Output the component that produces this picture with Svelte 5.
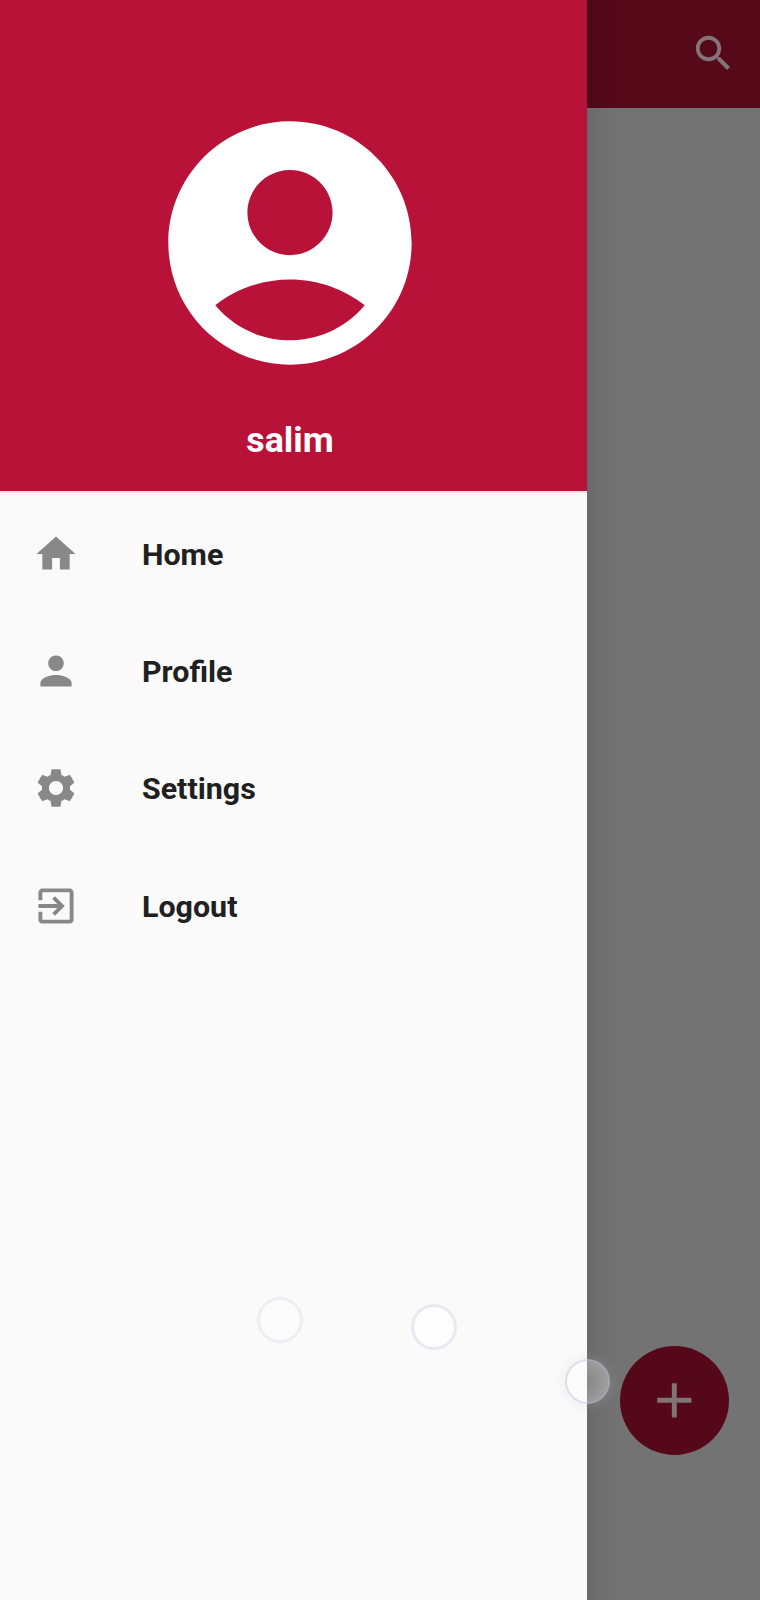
<script>
  const items = [
    { label: 'Home', path: 'M10 20v-6h4v6h5v-8h3L12 3 2 12h3v8z' },
    { label: 'Profile', path: 'M12 12c2.21 0 4-1.79 4-4s-1.79-4-4-4-4 1.79-4 4 1.79 4 4 4zm0 2c-2.67 0-8 1.34-8 4v2h16v-2c0-2.66-5.33-4-8-4z' },
    { label: 'Settings', path: 'M19.14 12.94c.04-.3.06-.61.06-.94 0-.32-.02-.64-.07-.94l2.03-1.58c.18-.14.23-.41.12-.61l-1.92-3.32c-.12-.22-.37-.29-.59-.22l-2.39.96c-.5-.38-1.03-.7-1.62-.94l-.36-2.54c-.04-.24-.24-.41-.48-.41h-3.84c-.24 0-.43.17-.47.41l-.36 2.54c-.59.24-1.13.57-1.62.94l-2.39-.96c-.22-.08-.47 0-.59.22L2.74 8.87c-.12.21-.08.47.12.61l2.03 1.58c-.05.3-.09.63-.09.94s.02.64.07.94l-2.03 1.58c-.18.14-.23.41-.12.61l1.92 3.32c.12.22.37.29.59.22l2.39-.96c.5.38 1.03.7 1.62.94l.36 2.54c.05.24.24.41.48.41h3.84c.24 0 .44-.17.47-.41l.36-2.54c.59-.24 1.13-.56 1.62-.94l2.39.96c.22.08.47 0 .59-.22l1.92-3.32c.12-.22.07-.47-.12-.61l-2.01-1.58zM12 15.6c-1.98 0-3.6-1.62-3.6-3.6s1.62-3.6 3.6-3.6 3.6 1.62 3.6 3.6-1.62 3.6-3.6 3.6z' },
    { label: 'Logout', path: 'M10.09 15.59L11.5 17l5-5-5-5-1.41 1.41L12.67 11H3v2h9.67l-2.58 2.59zM19 3H5c-1.11 0-2 .9-2 2v4h2V5h14v14H5v-4H3v4c0 1.1.89 2 2 2h14c1.1 0 2-.9 2-2V5c0-1.1-.9-2-2-2z' }
  ];
</script>

<div class="screen">
  <aside class="drawer">
    <header>
      <svg class="avatar" viewBox="0 0 24 24">
        <path fill-rule="evenodd" d="M12 2C6.48 2 2 6.48 2 12s4.48 10 10 10 10-4.48 10-10S17.52 2 12 2zM12 6c1.93 0 3.5 1.57 3.5 3.5S13.93 13 12 13s-3.5-1.57-3.5-3.5S10.07 6 12 6zM12 20c-2.03 0-4.43-.82-6.14-2.88C7.55 15.8 9.68 15 12 15s4.45.8 6.14 2.12C16.43 19.18 14.03 20 12 20z" />
      </svg>
      <div class="name">salim</div>
    </header>
    <nav>
      {#each items as item}
        <div class="item">
          <svg viewBox="-0.3 -0.3 24.6 24.6"><path d={item.path} /></svg>
          <span>{item.label}</span>
        </div>
      {/each}
    </nav>
  </aside>
  <main>
    <div class="appbar">
      <svg viewBox="0 0 24 24"><path d="M15.5 14h-.79l-.28-.27C15.41 12.59 16 11.11 16 9.5 16 5.91 13.09 3 9.5 3S3 5.91 3 9.5 5.91 16 9.5 16c1.61 0 3.09-.59 4.23-1.57l.27.28v.79l5 4.99L20.49 19l-4.99-5zm-6 0C7.01 14 5 11.99 5 9.5S7.01 5 9.5 5 14 7.01 14 9.5 11.99 14 9.5 14z" /></svg>
    </div>
    <div class="fab">
      <svg viewBox="0 0 24 24"><path d="M19 13h-6v6h-2v-6H5v-2h6V5h2v6h6v2z" /></svg>
    </div>
  </main>
  <i class="touch first"></i>
  <i class="touch second"></i>
  <i class="touch third"></i>
</div>

<style>
  :global(body) { margin: 0; }
  .screen {
    position: relative;
    display: flex;
    width: 760px;
    height: 1600px;
    overflow: hidden;
    background: #737373;
    font-family: Roboto, sans-serif;
    font-weight: 700;
  }
  svg { display: block; fill: currentColor; flex: none; }
  .drawer { width: 587px; flex: none; background: #fafafa; }
  header {
    box-sizing: border-box;
    height: 493px;
    padding: 97px 7px 0 0;
    display: flex;
    flex-direction: column;
    align-items: center;
    color: #fff;
    background: #b81238;
    border-bottom: 2px solid #f3e1e6;
  }
  .avatar { width: 292px; height: 292px; }
  .name { margin-top: 30px; font-size: 35.8px; line-height: 42px; }
  nav { padding-top: 2.5px; }
  .item {
    display: flex;
    align-items: center;
    gap: 62px;
    height: 117.2px;
    padding-left: 32px;
    font-size: 30.4px;
    line-height: 36px;
    color: #202020;
  }
  .item svg { width: 48px; height: 48px; color: #888; }
  .item span { padding-top: 1.8px; }
  main {
    flex: 1;
    display: flex;
    flex-direction: column;
    align-items: flex-end;
    justify-content: space-between;
    background: linear-gradient(90deg, #696969, #6f6f6f 14px, #737373 34px);
  }
  .appbar {
    box-sizing: border-box;
    width: 100%;
    height: 108px;
    padding: 29.6px 23.2px 0 0;
    display: flex;
    justify-content: flex-end;
    color: #857477;
    background: linear-gradient(90deg, #4c0816, #520919 14px, #550919 34px);
  }
  .appbar svg { width: 46.8px; height: 46.8px; }
  .fab {
    display: flex;
    align-items: center;
    justify-content: center;
    width: 109px;
    height: 109px;
    margin: 0 31px 145px 0;
    border-radius: 50%;
    color: #7f7476;
    background: #550819;
  }
  .fab svg { width: 58.6px; height: 58.6px; }
  .touch {
    position: absolute;
    box-sizing: border-box;
    width: 46px;
    height: 46px;
    border-radius: 50%;
    border: 3px solid #ededf6;
    background: #fbfbfc;
  }
  .first { left: 257px; top: 1297px; }
  .second { left: 411px; top: 1304px; border-color: #e8e8f3; background: #fdfdfd; }
  .third {
    left: 565px;
    top: 1359px;
    width: 45px;
    height: 45px;
    border: 2px solid rgba(175, 175, 210, 0.4);
    background: radial-gradient(circle, rgba(255, 255, 255, 0.2), rgba(255, 255, 255, 0.32) 70%);
    box-shadow: 0 0 12px 2px rgba(195, 195, 205, 0.2);
  }
</style>
